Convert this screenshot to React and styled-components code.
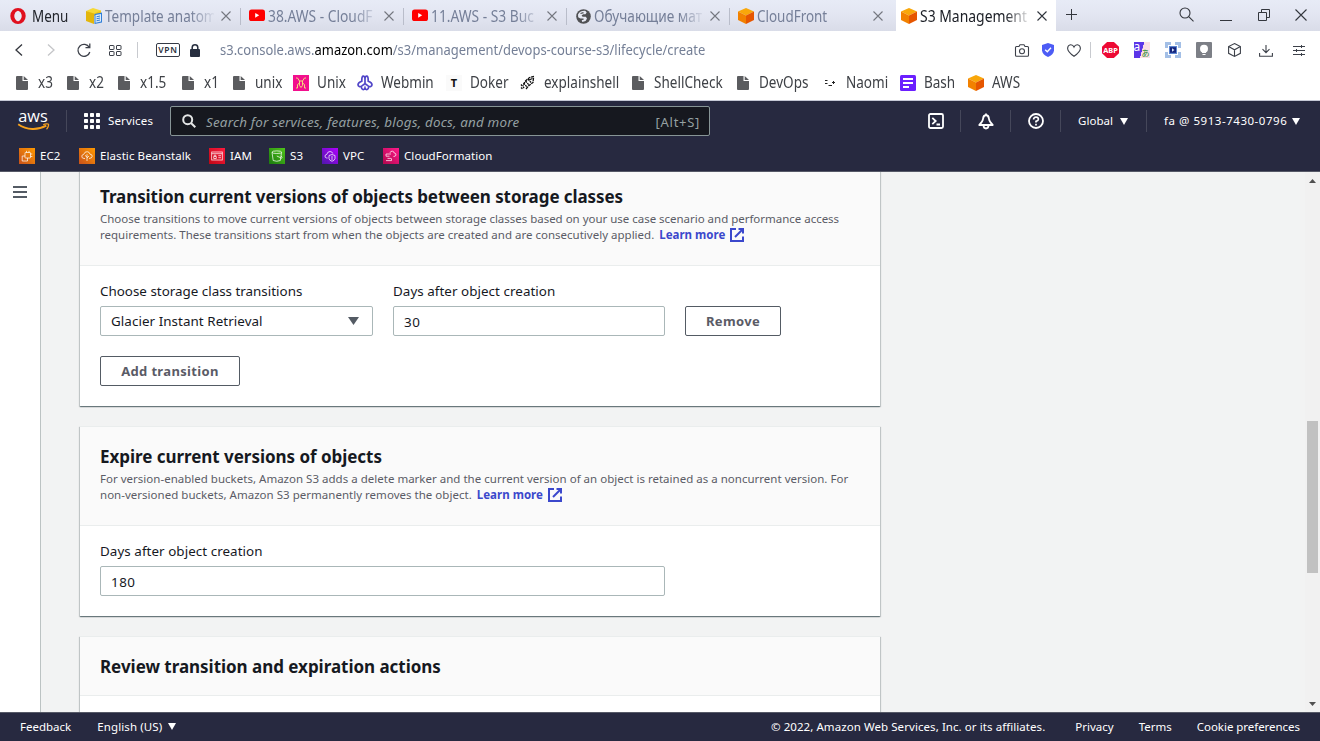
import React from 'react';
import styled, { createGlobalStyle } from 'styled-components';

const Global = createGlobalStyle`
  * { box-sizing: border-box; }
  html, body { margin: 0; padding: 0; overflow: hidden; }
  body { font-family: "Noto Sans", "Liberation Sans", sans-serif; }
  svg { display: block; flex: none; overflow: visible; }
  button, input { font-family: inherit; margin: 0; }
`;

const NAVY = '#272940';

const Window = styled.div`
  width: 1320px;
  height: 741px;
  display: flex;
  flex-direction: column;
  overflow: hidden;
  background: #fff;
`;

/* Browser text, slightly condensed */
const Condensed = styled.span`
  display: inline-block;
  white-space: nowrap;
  font-size: ${(p) => p.$size || 16}px;
  line-height: 22px;
  transform: scaleX(${(p) => p.$scale || 0.845});
  transform-origin: left center;
`;

/* ---------- tab strip ---------- */
const TabStrip = styled.div`
  height: 31px;
  flex: none;
  display: flex;
  background: linear-gradient(#e7ebf6 0%, #e3e6f2 45%, #d9dce8 100%);
`;
const MenuButton = styled.div`
  width: 78px;
  padding-left: 10px;
  display: flex;
  align-items: center;
  gap: 6px;
  color: #22252c;
`;
const TabItem = styled.div`
  width: ${(p) => (p.$last ? 166 : p.$active ? 160 : 163)}px;
  flex: none;
  display: flex;
  align-items: center;
  padding: 1px 0 0 ${(p) => (p.$active ? 5 : 8)}px;
  color: ${(p) => (p.$active ? '#1b1e25' : '#757f98')};
  background: ${(p) => (p.$active ? '#fff' : 'transparent')};
`;
const TabTitle = styled.div`
  width: 109px;
  margin-left: 3px;
  height: 22px;
  ${(p) => p.$fade && 'mask-image: linear-gradient(90deg, #000 78%, transparent 102%);'}
`;
const TabClose = styled.div`
  width: 24px;
  margin-left: ${(p) => (p.$active ? 1 : 0)}px;
  display: flex;
  justify-content: center;
  color: ${(p) => (p.$active ? '#30343c' : '#74777f')};
`;
const TabDivider = styled.div`
  width: 1px;
  height: 17px;
  margin-left: 3px;
  background: #b9bdca;
`;
const NewTab = styled.div`
  width: 31px;
  display: flex;
  align-items: center;
  justify-content: center;
  padding-bottom: 2px;
`;
const WindowControls = styled.div`
  margin-left: auto;
  display: flex;
  align-items: center;
  padding-bottom: 2px;
  color: #33363d;
`;
const Slot = styled.div`
  width: ${(p) => p.$w}px;
  flex: none;
  display: flex;
  align-items: center;
  justify-content: center;
`;

/* ---------- address bar ---------- */
const AddressBar = styled.div`
  height: 38px;
  flex: none;
  display: flex;
  align-items: center;
  padding-left: 3px;
  color: #3c4049;
`;
const Separator = styled.div`
  width: 1px;
  height: 16px;
  flex: none;
  background: #c8cacf;
`;
const Vpn = styled.div`
  width: 24px;
  height: 14px;
  margin: 0 10px 0 18px;
  border: 1px solid #343a46;
  border-radius: 2px;
  font-size: 8.5px;
  line-height: 12px;
  font-weight: 600;
  letter-spacing: 0.7px;
  text-align: center;
  color: #2a303c;
`;
const Url = styled.div`
  margin-left: 20px;
  padding-bottom: 2px;
  width: 500px;
  color: #747f96;
  b { font-weight: 400; color: #000; }
`;
const AddressActions = styled.div`
  margin-left: auto;
  padding-right: 5px;
  display: flex;
  align-items: center;
`;
const AbpBadge = styled.div`
  width: 17px;
  height: 16px;
  clip-path: polygon(30% 0, 70% 0, 100% 30%, 100% 70%, 70% 100%, 30% 100%, 0 70%, 0 30%);
  background: #ed0a34;
  text-align: center;
  font: 700 7.4px/16px "Noto Sans", sans-serif;
  color: #fff;
`;
const Translate = styled.div`
  width: 16px;
  height: 16px;
  display: flex;
  justify-content: space-between;
  background: linear-gradient(105deg, #5b35e8 50%, #fbdfe4 51%);
  font: 12px/9px "Noto Sans", "Noto Sans CJK JP", sans-serif;
  color: #fff;
  span:last-child { font-size: 8px; line-height: 21px; color: #178a2c; font-family: "Noto Sans CJK JP", sans-serif; }
`;

/* ---------- bookmarks ---------- */
const Bookmarks = styled.div`
  height: 31px;
  flex: none;
  display: flex;
  padding: 2px 0 0 14px;
  color: #3e4146;
`;
const Bookmark = styled.div`
  width: ${(p) => p.$w}px;
  height: 22px;
  flex: none;
  display: flex;
  align-items: center;
`;
const BookmarkIcon = styled.div`
  width: 16px;
  height: 20px;
  margin: 2px 8px 0 0;
  flex: none;
  display: flex;
  align-items: center;
  justify-content: center;
`;
const LetterIcon = styled.div`
  width: 16px;
  height: 16px;
  background: #fafafa;
  color: #111;
  font: 700 11px/16px "Noto Sans", sans-serif;
  text-align: center;
`;

/* ---------- console header ---------- */
const ConsoleHeader = styled.header`
  height: 72px;
  flex: none;
  border-top: 1px solid #c5c8d6;
  border-bottom: 1px solid #565967;
  background: ${NAVY};
  color: #fff;
  font-size: 11.5px;
`;
const HeaderMain = styled.div`
  height: 40px;
  display: flex;
  align-items: center;
`;
const HeaderRule = styled.div`
  width: 1px;
  height: 22px;
  flex: none;
  background: #45475a;
`;
const Services = styled.div`
  width: 103px;
  padding-left: 17px;
  display: flex;
  align-items: center;
  gap: 8px;
  letter-spacing: 0.15px;
  span { padding-bottom: 2px; }
`;
const SearchBox = styled.div`
  width: 540px;
  height: 30px;
  display: flex;
  align-items: center;
  padding: 0 9px 0 11px;
  border: 1px solid #879596;
  border-radius: 2px;
  background: #16181f;
  color: #95a0a2;
`;
const Placeholder = styled.span`
  flex: 1;
  margin-left: 10px;
  padding-top: 2px;
  font-size: 13.4px;
  font-style: italic;
  letter-spacing: 0.2px;
`;
const Shortcut = styled.span`
  padding-top: 1px;
  font-size: 13px;
  letter-spacing: 0.7px;
`;
const HeaderRight = styled.div`
  margin-left: auto;
  display: flex;
  align-items: center;
`;
const HeaderMenu = styled.div`
  width: ${(p) => p.$w}px;
  padding-left: ${(p) => p.$pl}px;
  display: flex;
  align-items: center;
  gap: ${(p) => p.$gap}px;
  white-space: nowrap;
  letter-spacing: ${(p) => p.$ls}px;
  span { padding-bottom: 2px; }
`;
const Favorites = styled.div`
  height: 29px;
  display: flex;
  align-items: center;
  padding-left: 19px;
`;
const Favorite = styled.div`
  width: ${(p) => p.$w}px;
  display: flex;
  align-items: center;
  gap: 5px;
  white-space: nowrap;
  letter-spacing: 0.08px;
`;
const ServiceTile = styled.div`
  width: 16px;
  height: 16px;
  flex: none;
  display: flex;
  align-items: center;
  justify-content: center;
  background: linear-gradient(45deg, ${(p) => p.$from}, ${(p) => p.$to});
`;

/* ---------- page ---------- */
const Page = styled.div`
  height: 540px;
  flex: none;
  display: flex;
  overflow: hidden;
  background: #f2f3f3;
`;
const SideRail = styled.nav`
  width: 41px;
  flex: none;
  padding: 14px 0 0 13px;
  border-right: 1px solid #bcc3c3;
  background: #fff;
`;
const Content = styled.main`
  flex: 1;
  height: 540px;
  overflow: hidden;
  padding-left: 39px;
`;
const Cards = styled.div`
  margin-top: -6px;
  display: flex;
  flex-direction: column;
  gap: 20px;
`;
const Card = styled.section`
  width: 800px;
  flex: none;
  border-top: 1px solid #eaeded;
  background: #fff;
  box-shadow: 0 1px 1px 0 rgba(0, 28, 36, 0.4), 1px 1px 1px 0 rgba(0, 28, 36, 0.15), -1px 1px 1px 0 rgba(0, 28, 36, 0.15);
`;
const CardHeader = styled.div`
  padding: 19px 20px ${(p) => (p.$compact ? 17 : 22)}px;
  border-bottom: 1px solid #eaeded;
  background: #fafafa;
`;
const CardTitle = styled.h2`
  margin: 0 0 ${(p) => (p.$compact ? 0 : 3)}px;
  font-size: 17px;
  line-height: 22px;
  font-weight: 700;
  letter-spacing: ${(p) => p.$ls || -0.08}px;
  color: #16191f;
`;
const Description = styled.p`
  margin: 0;
  font-size: 11.5px;
  line-height: 16px;
  letter-spacing: ${(p) => p.$ls}px;
  white-space: nowrap;
  color: #5b5c66;
`;
const DescriptionLine = styled.span`
  display: flex;
  height: 16px;
  align-items: center;
  letter-spacing: ${(p) => (p.$ls === undefined ? 'inherit' : `${p.$ls}px`)};
`;
const LearnMore = styled.a`
  display: inline-flex;
  align-items: center;
  gap: 5px;
  margin-left: 5px;
  font-weight: 700;
  color: #3b48cc;
`;
const CardBody = styled.div`
  padding: 14px 20px 20px;
`;
const FieldRow = styled.div`
  display: flex;
  align-items: flex-end;
  gap: 20px;
`;
const Field = styled.div`
  width: ${(p) => p.$w}px;
  flex: none;
`;
const Label = styled.label`
  display: block;
  margin-bottom: 4px;
  font-size: 13.4px;
  line-height: 22px;
  letter-spacing: ${(p) => p.$ls || 0}px;
  white-space: nowrap;
  color: #16191f;
`;
const Control = styled.div`
  height: 30px;
  padding: ${(p) => (p.$select ? '0 13px 0 10px' : '2px 10px 0')};
  display: flex;
  align-items: center;
  justify-content: space-between;
  border: 1px solid #aab7b8;
  border-radius: 2px;
  background: #fff;
  font-size: 13.4px;
  letter-spacing: ${(p) => (p.$select ? 0.06 : 0.5)}px;
  color: #16191f;
`;
const Button = styled.button`
  width: ${(p) => p.$w}px;
  height: 30px;
  padding: 0;
  display: block;
  border: 1px solid #545b64;
  border-radius: 2px;
  background: #fff;
  font-size: 13px;
  font-weight: 700;
  letter-spacing: 0.35px;
  color: #5a5b66;
`;
const AddButton = styled(Button)`
  margin-top: 20px;
`;
const ScrollTrack = styled.div`
  width: 15px;
  flex: none;
  display: flex;
  flex-direction: column;
  align-items: center;
  justify-content: space-between;
  padding: 7px 0 6px;
  background: #f1f1f1;
`;
const ScrollThumb = styled.div`
  width: 11px;
  height: 152px;
  margin-top: 236px;
  margin-bottom: 128px;
  background: #c1c1c1;
`;

const Footer = styled.footer`
  height: 29px;
  flex: none;
  display: flex;
  align-items: center;
  padding: 0 20px 1px;
  border-top: 1px solid #565967;
  background: ${NAVY};
  color: #fff;
  font-size: 11.5px;
  white-space: nowrap;
`;
const FooterItem = styled.span`
  display: flex;
  align-items: center;
  gap: 6px;
  margin-left: ${(p) => p.$ml || 0}px;
  letter-spacing: ${(p) => p.$ls || 0}px;
`;
const Copyright = styled(FooterItem)`
  margin-left: auto;
`;

/* ---------- drawings ---------- */
const Triangle = ({ w = 8, h = 7, up, color = '#fff' }) => (
  <svg width={w} height={h}>
    <path d={up ? `M0 ${h}L${w / 2} 0L${w} ${h}z` : `M0 0H${w}L${w / 2} ${h}z`} fill={color} />
  </svg>
);
const Cross = ({ s = 10, w = 1.1 }) => (
  <svg width={s} height={s}>
    <path d={`M.5 .5L${s - 0.5} ${s - 0.5}M${s - 0.5} .5L.5 ${s - 0.5}`} stroke="currentColor" strokeWidth={w} />
  </svg>
);
const Cube = () => (
  <svg width="16" height="16" viewBox="0 0 16 16">
    <path d="M8 0L16 3.5L8 7.5L0 3.5z" fill="#f9a70a" />
    <path d="M0 3.5L8 7.5V16L0 12z" fill="#f28100" />
    <path d="M16 3.5L8 7.5V16L16 12z" fill="#e65600" />
  </svg>
);
const YouTube = () => (
  <svg width="16" height="12">
    <rect width="16" height="11.5" y="-.4" rx="2.6" fill="#f00" />
    <path d="M6.2 2.9L10.2 5.3L6.2 7.7z" fill="#fff" />
  </svg>
);
const DocsCube = () => (
  <svg width="16" height="16" viewBox="0 0 16 16">
    <path d="M0 3L7 0L15 2.5V5L8 7z" fill="#f6d936" />
    <path d="M0 3L8 5.5V16L0 13z" fill="#e3b60b" />
    <path d="M8 5.5L15 2.5V6L8 8z" fill="#edc722" />
    <path d="M8.5 6L16 4.5V14.5L8.5 16z" fill="#2f7ed8" />
    <path d="M9.5 7L15 5.9V13.6L9.5 14.8z" fill="#dcecfb" />
    <path d="M10.5 8.8L14 8M10.5 10.8L14 10M10.5 12.8L14 12" stroke="#2f7ed8" strokeWidth="1" />
  </svg>
);
const Globe = () => (
  <svg width="15" height="15" viewBox="0 0 15 15">
    <circle cx="7.5" cy="7.5" r="7.3" fill="#505154" />
    <path d="M2 5.5C3.5 2.5 6.5 1.6 9.5 1.9L10.7 3.6L9.5 5.2H7.2L5.6 6.4L6.6 7.7H9.8L11 9.4L9.6 12L6.3 13.1L5.7 11.3L7.9 10.6L7.4 9.5H4.4L2.2 8.2z" fill="#e6e9f3" />
    <path d="M4.5 4.5L7.5 3.6" stroke="#505154" strokeWidth="1.3" />
  </svg>
);
const OperaLogo = () => (
  <svg width="16" height="16">
    <ellipse cx="8" cy="8" rx="5.7" ry="6.1" fill="none" stroke="#e0101e" strokeWidth="4" />
    <ellipse cx="8" cy="8" rx="3.2" ry="5.3" fill="#e9ebf5" />
  </svg>
);
const Doc = () => (
  <svg width="12" height="14">
    <path d="M1 0H6.5V5H12V13Q12 14 11 14H1Q0 14 0 13V1Q0 0 1 0z" fill="#5b5c5f" />
    <path d="M7.7 0L12 4H7.7z" fill="#5b5c5f" />
  </svg>
);
const Dragon = () => (
  <svg width="16" height="16">
    <rect width="16" height="16" fill="#f20f8d" />
    <path d="M3 3H4.5L6.5 6H9.5L11.5 3H13M6.5 6V10.5L8 12.5L9.5 10.5V6M6.5 8L4.5 9.5V13H3M9.5 8L11.5 9.5V13H13" fill="none" stroke="#f4d97b" strokeWidth="1" />
  </svg>
);
const Webmin = () => (
  <svg width="16" height="16" fill="none" stroke="#5045c8" strokeWidth="1.7">
    <path d="M8 9V4C8 1.7 6.9 1 6 1.2C4.7 1.5 4.8 3 4.8 6.2C2.2 7 1 8.2 1 9.8C1 11.5 3 12.2 4.6 11.1L8 8.5L11.4 11.1C13 12.2 15 11.5 15 9.8C15 8.2 13.8 7 11.2 6.2C11.2 3 11.3 1.5 10 1.2C9 1 8 1.7 8 4" />
    <path d="M4.3 11.5C4.3 15 7.2 15.6 8 13C8.8 15.6 11.7 15 11.7 11.5" />
  </svg>
);
const Shell = () => (
  <svg width="14" height="14" fill="none" stroke="#111" strokeWidth="1.3">
    <path d="M13 .5L8.5 1.5L4 5.5L2 10M12.5 2L12 6.5L8 9.5L5 13" strokeDasharray="3 .7" />
    <path d="M0 8.5L3.5 12.5M0 11.5L2 13.5M2.5 7L6 11M4.5 5L8 9M7 3L10 6.5" strokeDasharray="2 .8" />
    <path d="M8 4L11.5 2.5" />
  </svg>
);
const Face = () => (
  <svg width="12" height="6" stroke="#222" strokeWidth="1">
    <path d="M1 .5H3.5M1 3.5H3.5M4.5 5.5H8M8 2.5H11M9.5 1V4" />
  </svg>
);
const BashIcon = () => (
  <svg width="16" height="16">
    <rect width="16" height="16" rx="1.5" fill="#6b1fff" />
    <path d="M3 4H13M3 8H13M3 12H9" stroke="#fff" strokeWidth="2" />
  </svg>
);
const AwsLogo = () => (
  <svg width="32" height="22" viewBox="0 0 32 22">
    <text x="1.3" y="11.5" fontFamily="Open Sans, sans-serif" fontSize="16.5" fontWeight="500" fill="#fff" textLength="29.5" lengthAdjust="spacingAndGlyphs">aws</text>
    <path d="M1.2 14.2C9.7 20.3 21 20.3 29.3 15.7" fill="none" stroke="#f7a11b" strokeWidth="1.9" />
    <path d="M26.2 14.7C28.2 13.6 31.2 13.6 31.5 14.3C31.8 15.3 30.9 18 29.5 19.2" fill="none" stroke="#f7a11b" strokeWidth="1.3" />
  </svg>
);
const AppGrid = () => (
  <svg width="16" height="16" fill="#fff">
    {[0, 6, 12].map((y) => [0, 6, 12].map((x) => <rect key={`${x}-${y}`} x={x} y={y} width="4" height="4" rx=".7" />))}
  </svg>
);
const External = () => (
  <svg width="14" height="14" fill="none" stroke="#3b48cc" strokeWidth="2">
    <path d="M6 1H1V13H13V8.5" />
    <path d="M8.5 1H13V5.5M13 1L5 9" />
  </svg>
);

const tabs = [
  { title: 'Template anatom', icon: <DocsCube />, fade: true },
  { title: '38.AWS - CloudF', icon: <YouTube />, fade: true, scale: 0.862 },
  { title: '11.AWS - S3 Buc', icon: <YouTube />, fade: true, scale: 0.862 },
  { title: 'Обучающие мат', icon: <Globe />, fade: true, scale: 0.857 },
  { title: 'CloudFront', icon: <Cube />, last: true, scale: 0.84 },
  { title: 'S3 Management', icon: <Cube />, active: true, fade: true, scale: 0.87 },
];

const bookmarks = [
  ['x3', 51, <Doc />], ['x2', 51, <Doc />], ['x1.5', 64, <Doc />], ['x1', 51, <Doc />], ['unix', 62, <Doc />],
  ['Unix', 64, <Dragon />], ['Webmin', 89, <Webmin />], ['Doker', 74, <LetterIcon>T</LetterIcon>],
  ['explainshell', 110, <Shell />], ['ShellCheck', 105, <Doc />], ['DevOps', 87, <Doc />],
  ['Naomi', 78, <Face />], ['Bash', 68, <BashIcon />], ['AWS', 70, <Cube />],
];

const glyph = { width: 12, height: 12, fill: 'none', stroke: '#fff', strokeWidth: 0.8, strokeOpacity: 0.9 };
const favorites = [
  ['EC2', 60, '#c8511b', '#f90', <svg {...glyph}><rect x="4" y="2.5" width="5.5" height="5.5" rx=".6" /><path d="M4 6H1.2V11H6.5V8M5.5 2.5V.8M8 2.5V.8M9.5 4H11.3M9.5 6.5H11.3" /></svg>],
  ['Elastic Beanstalk', 130, '#c8511b', '#f90', <svg {...glyph}><path d="M4 8.5H3Q.5 8.3 .8 6Q1 4.6 2.8 4.3Q3.5 1.5 6.2 1.7Q8.5 1.8 9 4.2Q11.4 4.3 11.2 6.4Q11 8.3 8 8.5M6 11V4.2M6 7L4 5.4M6 8L8 6" /></svg>],
  ['IAM', 60, '#bd0816', '#ff1a3d', <svg {...glyph}><rect x=".7" y="2" width="10.6" height="8" /><path d="M.7 3.7H11.3M7.3 5.7H10M7.3 7.7H10" /><path d="M2.7 8.5V6.5H5.3V8.5zM3.2 6.3V5.2H4.8V6.3" /></svg>],
  ['S3', 53, '#1b7a0f', '#4fc41a', <svg {...glyph}><ellipse cx="5.8" cy="2.2" rx="4.8" ry="1.3" /><path d="M1 2.2L2.2 10.5Q5.8 12 9.3 10.5L10.6 2.2M5.8 6L10.5 8.2Q12 8 10.2 6" /></svg>],
  ['VPC', 61, '#4d17aa', '#b100ff', <svg {...glyph}><path d="M3.6 8H2.7Q.8 7.7 1 6Q1.2 4.5 2.8 4.4Q3.4 1.5 6 1.5Q8.3 1.5 8.8 3.6" /><path d="M8 4.5L11 5.5V8.5Q10.6 10.4 8 11.3Q5.3 10.4 5 8.5V5.5zM8 6V10" /></svg>],
  ['CloudFormation', 110, '#b0084d', '#ff1a8b', <svg {...glyph}><path d="M1 4H6M1 6.2H4.5M2.5 8.4H6M1 10.6H6.5V8.4M1 4V6.2M5 2.8Q5.5 1 7.4 1.2Q9 1.4 9.2 3Q11.2 3.2 11 5Q10.7 6.5 8.5 6.5" /></svg>],
];

function BrowserChrome() {
  return (
    <>
      <TabStrip>
        <MenuButton><OperaLogo /><Condensed $scale={0.84}>Menu</Condensed></MenuButton>
        {tabs.map((t) => (
          <TabItem key={t.title} $active={t.active} $last={t.last}>
            <Slot $w={16}>{t.icon}</Slot>
            <TabTitle $fade={t.fade}><Condensed $scale={t.scale}>{t.title}</Condensed></TabTitle>
            <TabClose $active={t.active}><Cross /></TabClose>
            {!t.active && !t.last && <TabDivider />}
          </TabItem>
        ))}
        <NewTab><svg width="11" height="11"><path d="M5.5 0V11M0 5.5H11" stroke="#33363d" /></svg></NewTab>
        <WindowControls>
          <Slot $w={39}><svg width="15" height="15" fill="none" stroke="#33363d" strokeWidth="1.1"><circle cx="6" cy="6" r="5" /><path d="M9.7 9.7L14.5 14.3" /></svg></Slot>
          <Slot $w={39}><svg width="12" height="12"><path d="M0 11.5H12" stroke="#33363d" /></svg></Slot>
          <Slot $w={37}><svg width="12" height="12" fill="none" stroke="#33363d"><path d="M.5 3.5H8.5V11.5H.5zM3.5 3.5V.5H11.5V8.5H8.5" /></svg></Slot>
          <Slot $w={38}><Cross s={12} /></Slot>
        </WindowControls>
      </TabStrip>
      <AddressBar>
        <Slot $w={32}><svg width="8" height="12" fill="none" stroke="#33363d" strokeWidth="1.3"><path d="M7 .5L1 6L7 11.5" /></svg></Slot>
        <Slot $w={32}><svg width="8" height="12" fill="none" stroke="#c4c5c8" strokeWidth="1.3"><path d="M1 .5L7 6L1 11.5" /></svg></Slot>
        <Slot $w={33}><svg width="14" height="14" fill="none" stroke="#3c4049" strokeWidth="1.3"><path d="M12.3 4.5A6 6 0 1 0 12.8 9M12.8 .5V4.7H8.5" /></svg></Slot>
        <Slot $w={30}><svg width="13" height="11" fill="none" stroke="#3c4049"><rect x=".5" y=".5" width="4.5" height="4" rx=".5" /><rect x="7.5" y=".5" width="4.5" height="4" rx=".5" /><rect x=".5" y="6.5" width="4.5" height="4" rx=".5" /><rect x="7.5" y="6.5" width="4.5" height="4" rx=".5" /></svg></Slot>
        <Slot $w={7} />
        <Separator />
        <Vpn>VPN</Vpn>
        <svg width="10" height="13"><rect y="5" width="10" height="8" rx="1" fill="#262e3e" /><path d="M2.2 6V3.4Q2.4 .8 5 .8T7.8 3.4V6" fill="none" stroke="#262e3e" strokeWidth="1.5" /></svg>
        <Url><Condensed $size={14} $scale={0.926}>s3.console.aws.<b>amazon.com</b>/s3/management/devops-course-s3/lifecycle/create</Condensed></Url>
        <AddressActions>
          <Slot $w={26}><svg width="14" height="13" fill="none" stroke="#3c4049" strokeWidth="1.1"><path d="M.5 3.5Q.5 2.5 1.5 2.5H4L5 .8H9L10 2.5H12.5Q13.5 2.5 13.5 3.5V11.3Q13.5 12.3 12.5 12.3H1.5Q.5 12.3 .5 11.3z" /><circle cx="7" cy="7.3" r="2.5" /></svg></Slot>
          <Slot $w={26}><svg width="12" height="14"><path d="M6 0L12 2V7.5Q11.5 11.7 6 14Q.5 11.7 0 7.5V2z" fill="#4d5cf5" /><path d="M3.2 6.8L5.3 8.8L9 4.8" fill="none" stroke="#fff" strokeWidth="1.4" /></svg></Slot>
          <Slot $w={26}><svg width="14" height="13" fill="none" stroke="#3c4049" strokeWidth="1.1"><path d="M7 12.3Q.6 7.8 .6 4.2Q.8 1 3.6 .7Q6 .6 7 3Q8 .6 10.4 .7Q13.2 1 13.4 4.2Q13.4 7.8 7 12.3z" /></svg></Slot>
          <Slot $w={3} />
          <Separator />
          <Slot $w={4} />
          <Slot $w={31}><AbpBadge>ABP</AbpBadge></Slot>
          <Slot $w={31}><Translate><span>a</span><span>あ</span></Translate></Slot>
          <Slot $w={31}><svg width="16" height="16"><path d="M0 0H6V3H3V6H0zM10 0H16V6H13V3H10zM0 10H3V13H6V16H0zM16 10V16H10V13H13V10z" fill="#a3bfe6" /><rect x="4" y="4" width="8" height="8" fill="#5b84d0" /><rect x="5" y="5.2" width="6" height="5.6" fill="#12237d" /><path d="M7 6.2L9.5 8L7 9.8z" fill="#d7e3f7" /></svg></Slot>
          <Slot $w={31}><svg width="16" height="16"><rect width="16" height="16" rx="1" fill="#7c7f86" /><circle cx="8" cy="6.8" r="4" fill="#fff" /><path d="M6 10H10V11H6zM6.5 12H9.5V13H6.5z" fill="#fff" /></svg></Slot>
          <Slot $w={31}><svg width="13" height="14" fill="none" stroke="#3c4049" strokeWidth="1.1"><path d="M6.5 .6L12.4 3.6V10.3L6.5 13.4L.6 10.3V3.6zM.6 3.6L6.5 6.8L12.4 3.6M6.5 6.8V13.4" /></svg></Slot>
          <Slot $w={32}><svg width="14" height="13" fill="none" stroke="#3c4049" strokeWidth="1.1"><path d="M7 1V8.5M3.5 5.2L7 8.7L10.5 5.2M.6 9V12.3H13.4V9" /></svg></Slot>
          <Slot $w={33}><svg width="12" height="11" fill="none" stroke="#3c4049"><path d="M0 1.5H12M0 5.5H12M0 9.5H12M8.5 0V3M3.5 4V7M8.5 8V11" /></svg></Slot>
        </AddressActions>
      </AddressBar>
      <Bookmarks>
        {bookmarks.map(([name, w, icon]) => (
          <Bookmark key={name} $w={w}><BookmarkIcon>{icon}</BookmarkIcon><Condensed>{name}</Condensed></Bookmark>
        ))}
      </Bookmarks>
    </>
  );
}

function Header() {
  return (
    <ConsoleHeader>
      <HeaderMain>
        <Slot $w={66}><AwsLogo /></Slot>
        <HeaderRule />
        <Services><AppGrid /><span>Services</span></Services>
        <SearchBox>
          <svg width="14" height="14" fill="none" stroke="#e4e6e6" strokeWidth="2"><circle cx="5.7" cy="5.7" r="4.5" /><path d="M9 9L13.3 13.3" /></svg>
          <Placeholder>Search for services, features, blogs, docs, and more</Placeholder>
          <Shortcut>[Alt+S]</Shortcut>
        </SearchBox>
        <HeaderRight>
          <Slot $w={49}><svg width="16" height="16" fill="none" stroke="#fff" strokeWidth="1.8"><rect x="1" y="1" width="14" height="14" rx="1.5" /><path d="M4.3 4.8L7.7 8L4.3 11.2M8.5 11.5H12" /></svg></Slot>
          <HeaderRule />
          <Slot $w={49}><svg width="16" height="17" fill="none" stroke="#fff" strokeWidth="1.8" strokeLinejoin="round"><path d="M8 2C6 2.2 5.2 3.8 5 6C4.8 8.2 3.5 9.8 1.3 12H14.7C12.5 9.8 11.2 8.2 11 6C10.8 3.8 10 2.2 8 2zM8 .5V2M5.5 12.5Q5.7 15.5 8 15.5T10.5 12.5" /></svg></Slot>
          <HeaderRule />
          <Slot $w={49}><svg width="16" height="16" fill="none" stroke="#fff" strokeWidth="1.8"><circle cx="8" cy="8" r="7" /><path d="M5.6 6.5Q5.6 4.2 8 4.2T10.4 6.3Q10.4 7.6 8 8.4V9.6M8 10.8V12.5" strokeWidth="1.7" /></svg></Slot>
          <HeaderRule />
          <HeaderMenu $w={85} $pl={17} $gap={7} $ls={0.05}><span>Global</span> <Triangle /></HeaderMenu>
          <HeaderRule />
          <HeaderMenu $w={173} $pl={17} $gap={5} $ls={0.54}><span>fa @ 5913-7430-0796</span> <Triangle /></HeaderMenu>
        </HeaderRight>
      </HeaderMain>
      <Favorites>
        {favorites.map(([name, w, from, to, icon]) => (
          <Favorite key={name} $w={w}><ServiceTile $from={from} $to={to}>{icon}</ServiceTile>{name}</Favorite>
        ))}
      </Favorites>
    </ConsoleHeader>
  );
}

export default function App() {
  return (
    <Window>
      <Global />
      <BrowserChrome />
      <Header />
      <Page>
        <SideRail>
          <svg width="14" height="12" fill="#545b64"><path d="M0 0H14V2H0zM0 5H14V7H0zM0 10H14V12H0z" /></svg>
        </SideRail>
        <Content>
          <Cards>
            <Card>
              <CardHeader>
                <CardTitle>Transition current versions of objects between storage classes</CardTitle>
                <Description $ls={-0.02}>
                  <DescriptionLine>Choose transitions to move current versions of objects between storage classes based on your use case scenario and performance access</DescriptionLine>
                  <DescriptionLine $ls={0.005}>requirements. These transitions start from when the objects are created and are consecutively applied. <LearnMore>Learn more <External /></LearnMore></DescriptionLine>
                </Description>
              </CardHeader>
              <CardBody>
                <FieldRow>
                  <Field $w={273}>
                    <Label>Choose storage class transitions</Label>
                    <Control $select>Glacier Instant Retrieval <Triangle w={11} h={8} color="#545b64" /></Control>
                  </Field>
                  <Field $w={272}>
                    <Label $ls={0.05}>Days after object creation</Label>
                    <Control>30</Control>
                  </Field>
                  <Button $w={96}>Remove</Button>
                </FieldRow>
                <AddButton $w={140}>Add transition</AddButton>
              </CardBody>
            </Card>
            <Card>
              <CardHeader>
                <CardTitle $ls={-0.04}>Expire current versions of objects</CardTitle>
                <Description $ls={0.012}>
                  <DescriptionLine>For version-enabled buckets, Amazon S3 adds a delete marker and the current version of an object is retained as a noncurrent version. For</DescriptionLine>
                  <DescriptionLine $ls={0.02}>non-versioned buckets, Amazon S3 permanently removes the object. <LearnMore>Learn more <External /></LearnMore></DescriptionLine>
                </Description>
              </CardHeader>
              <CardBody>
                <Field $w={565}>
                  <Label $ls={0.06}>Days after object creation</Label>
                  <Control>180</Control>
                </Field>
              </CardBody>
            </Card>
            <Card>
              <CardHeader $compact>
                <CardTitle $compact $ls={-0.03}>Review transition and expiration actions</CardTitle>
              </CardHeader>
              <CardBody />
            </Card>
          </Cards>
        </Content>
        <ScrollTrack>
          <Triangle up w={7} h={4} color="#505050" />
          <ScrollThumb />
          <Triangle w={7} h={4} color="#505050" />
        </ScrollTrack>
      </Page>
      <Footer>
        <FooterItem>Feedback</FooterItem>
        <FooterItem $ml={26} $ls={0.12}>English (US) <Triangle /></FooterItem>
        <Copyright $ls={0.07}>© 2022, Amazon Web Services, Inc. or its affiliates.</Copyright>
        <FooterItem $ml={30}>Privacy</FooterItem>
        <FooterItem $ml={25}>Terms</FooterItem>
        <FooterItem $ml={25} $ls={-0.04}>Cookie preferences</FooterItem>
      </Footer>
    </Window>
  );
}
